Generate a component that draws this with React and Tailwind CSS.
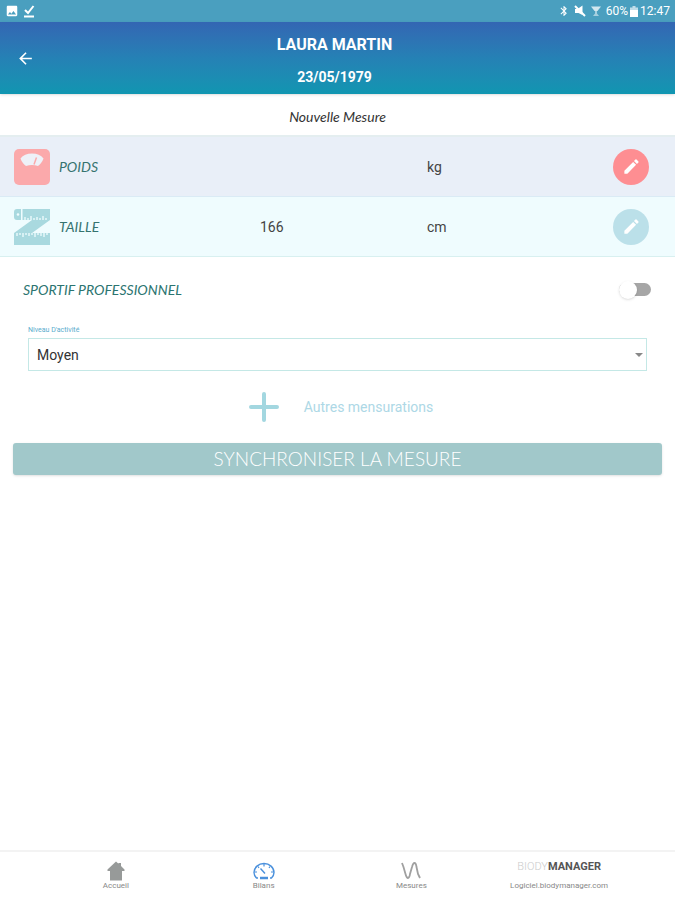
import React, { useState } from 'react';
import { MdArrowBack, MdBluetooth, MdEdit, MdImage } from 'react-icons/md';

// ─── Icons ─────────────────────────────────────────────────────

const DownloadDoneIcon = () => (
  <svg viewBox="0 0 12 14" className="w-3 h-[14px]" fill="none" stroke="#fff" strokeWidth="2">
    <path d="M2 6l3 3L10.500 2" />
    <path d="M1 12.500h10" />
  </svg>
);

const MuteIcon = () => (
  <svg viewBox="0 0 12 12" className="w-3 h-3" fill="#fff">
    <path d="M1 4h2.500L8.500 0.500V10L4.500 8H1z" />
    <path d="M1 1l10 10" stroke="#fff" strokeWidth="2" />
  </svg>
);

const WifiIcon = () => (
  <svg viewBox="0 0 12 12" className="w-3 h-3" fill="#fff">
    <path d="M1 1.500h10L7.500 6h-3z" opacity=".75" />
    <path d="M5 6h2v2.500l2 2.500H3l2-2.500z" opacity=".5" />
  </svg>
);

const BatteryIcon = () => (
  <svg viewBox="0 0 8 12" className="w-2 h-3">
    <path d="M2.500 1h3v1.500H8V5H0V2.500h2.500z" fill="#fff" opacity=".65" />
    <path d="M0 5h8v7H0z" fill="#fff" />
  </svg>
);

const ScaleIcon = () => (
  <svg viewBox="0 0 36 36" className="w-9 h-9">
    <rect width="36" height="36" rx="5" fill="#fba9ab" />
    <path d="M18 4.500c5 0 9 1.800 11.500 5-1.200 3.500-3.500 6.300-5.500 7.500-3.800-1.300-8.200-1.300-12 0-2-1.200-4.300-4-5.500-7.500C9 6.300 13 4.500 18 4.500z" fill="#eef1f8" />
    <path d="M20 15.500l2.500-7" stroke="#fba9ab" strokeWidth="1.500" />
  </svg>
);

const RulerIcon = () => (
  <svg viewBox="0 0 36 36" className="w-9 h-9">
    <path d="M0 3q0-3 3-3h4v11H3q-3 0-3-3zM8.500 0H36v11L18 24h18v12H0V24l18-13H8.500z" fill="#a9d9df" />
    <circle cx="4" cy="5.500" r="1.300" fill="#f0fcfe" />
    <path
      d="M11 11V8M14 11V9M17 11V7M20 11V9M23 11V8M26 11V9M29 11V7M32 11V9M3 24v3M6 24v2M9 24v4M12 24v2M15 24v3M18 24v2M21 24v4M24 24v2M27 24v3M30 24v4M33 24v2"
      stroke="#f0fcfe"
      strokeWidth="1.300"
    />
  </svg>
);

const HomeIcon = () => (
  <svg viewBox="0 0 18 20" className="w-[18px] h-5" fill="#979a99">
    <path d="M9 .5l2.500 2.200V2H14v3l3.500 3.500V10H15v9.500H3V10H.5V8.500z" />
  </svg>
);

const GaugeIcon = () => (
  <svg viewBox="0 0 22 18" className="w-[22px] h-5" fill="none" stroke="#4a90dc" strokeWidth="1.400">
    <path d="M5 16H3.500Q1 13.500 1 10.500C1 5.500 5.500 1.500 11 1.500s10 4 10 9q0 3-2.500 5.500H17" />
    <path d="M7 16h8" strokeWidth="2.500" />
    <path d="M7.500 6.500l4.500 5" />
    <path d="M11 2v2.500M5 4.500l1 1.500M17 4.500L16 6M1.500 10H4M18 10h2.500" strokeWidth="1.200" />
  </svg>
);

const CurveIcon = () => (
  <svg viewBox="0 0 20 18" className="w-5 h-5" fill="none" stroke="#a0a0a0" strokeWidth="1.800">
    <path d="M1 1l1.500 4 2 7q1 4 2.500 4t2-4l2-7q1-4 2.500-4t2 4l1.500 7 2 4" />
  </svg>
);

// ─── Sub-components ────────────────────────────────────────────

const StatusBar = () => (
  <div className="h-[22px] px-[5px] flex items-center justify-between bg-[#4a9fbf] text-white">
    <div className="flex items-center gap-1">
      <MdImage size={14} />
      <DownloadDoneIcon />
    </div>
    <div className="flex items-center gap-[2px] text-xs">
      <div className="flex items-center gap-1 pr-[2px]">
        <MdBluetooth size={12} />
        <MuteIcon />
        <WifiIcon />
      </div>
      <span>60%</span>
      <BatteryIcon />
      <span>12:47</span>
    </div>
  </div>
);

/** One measurement line: icon, name, value, unit and edit button */
const MeasureRow = ({ id, icon, label, unit, value, onChange, rowClass, buttonClass }) => (
  <div className={`h-[60px] pl-[14px] pr-[26px] grid grid-cols-[246fr_167fr_186fr_36fr] items-center border-b ${rowClass}`}>
    <label htmlFor={id} className="flex items-center gap-[9px] font-[Lato] italic text-sm text-[#35736f]">
      {icon}
      {label}
    </label>
    <input
      id={id}
      type="text"
      inputMode="decimal"
      value={value}
      onChange={(e) => onChange(e.target.value)}
      className="w-20 bg-transparent outline-none text-sm text-[#444]"
    />
    <span className="text-sm text-[#444]">{unit}</span>
    <button type="button" aria-label={label} className={`w-9 h-9 rounded-full flex items-center justify-center text-white ${buttonClass}`}>
      <MdEdit size={19} />
    </button>
  </div>
);

const NavItem = ({ icon, label }) => (
  <a href="#" className="flex flex-col items-center">
    {icon}
    <span className="text-[8px] leading-[10px]">{label}</span>
  </a>
);

// ─── Main Component ────────────────────────────────────────────

const App = () => {
  const [poids, setPoids] = useState('');
  const [taille, setTaille] = useState('166');
  const [sportif, setSportif] = useState(false);
  const [niveau, setNiveau] = useState('Moyen');

  return (
    <div className="min-h-screen flex flex-col bg-white font-[Roboto,sans-serif]">
      <StatusBar />

      {/* Patient header */}
      <header className="h-[72px] px-4 grid grid-cols-[24px_1fr_30px] items-center bg-linear-to-b from-[#3366b3] via-[#2581b5] to-[#1096b1] text-white shadow-sm">
        <button type="button" aria-label="Retour">
          <MdArrowBack size={19} />
        </button>
        <div className="pt-[6px] flex flex-col items-center gap-3 font-bold">
          <h1 className="text-base leading-5">LAURA MARTIN</h1>
          <p className="text-sm leading-5">23/05/1979</p>
        </div>
      </header>

      <main className="flex-1">
        <h2 className="h-[43px] pt-1 flex items-center justify-center font-[Lato] italic text-sm text-[#333] border-b-2 border-[#e4eef0]">
          Nouvelle Mesure
        </h2>

        <MeasureRow
          id="poids"
          icon={<ScaleIcon />}
          label="POIDS"
          unit="kg"
          value={poids}
          onChange={setPoids}
          rowClass="bg-[#e9eff8] border-[#daebf5]"
          buttonClass="bg-[#fe8e92]"
        />
        <MeasureRow
          id="taille"
          icon={<RulerIcon />}
          label="TAILLE"
          unit="cm"
          value={taille}
          onChange={setTaille}
          rowClass="bg-[#effcfe] border-[#d8f0f0]"
          buttonClass="bg-[#bbe0e9]"
        />

        <label className="h-[65px] pl-[23px] pr-6 flex items-center justify-between font-[Lato] italic text-sm text-[#2b7470]">
          SPORTIF PROFESSIONNEL
          <span className="relative w-8 h-5 flex items-center">
            <input
              type="checkbox"
              checked={sportif}
              onChange={(e) => setSportif(e.target.checked)}
              className="peer appearance-none w-8 h-[13px] rounded-full bg-[#a6a6a6] checked:bg-[#a9d9df]"
            />
            <span className="absolute left-0 w-[18px] h-[18px] rounded-full bg-white shadow peer-checked:left-[14px]" />
          </span>
        </label>

        <div className="px-7 flex flex-col">
          <label htmlFor="niveau" className="text-[7px] leading-4 text-[#5aaccd]">Niveau D'activité</label>
          <div className="relative">
            <select
              id="niveau"
              value={niveau}
              onChange={(e) => setNiveau(e.target.value)}
              className="block w-full h-[33px] px-2 appearance-none bg-white border border-[#c4e8e6] text-sm text-[#333]"
            >
              <option>Faible</option>
              <option>Moyen</option>
              <option>Intense</option>
            </select>
            <svg viewBox="0 0 8 4" className="absolute right-1 top-[15px] w-2 h-1 pointer-events-none" fill="#888">
              <path d="M0 0h8L4 4z" />
            </svg>
          </div>
        </div>

        <div className="h-[72px] pl-[6px] flex items-center justify-center">
          <button type="button" className="flex items-center gap-6 text-sm text-[#add8e6]">
            <svg viewBox="0 0 32 32" className="w-8 h-8" fill="none" stroke="#a3d7e0" strokeWidth="4" strokeLinecap="round">
              <path d="M16 3v26M3 16h26" />
            </svg>
            Autres mensurations
          </button>
        </div>

        <div className="px-[13px]">
          <button type="button" className="w-full h-8 rounded-[3px] bg-[#a1c8ca] text-white font-[Lato] font-light text-[19px] shadow-sm">
            SYNCHRONISER LA MESURE
          </button>
        </div>
      </main>

      <nav className="h-[50px] px-[42px] pt-[9px] grid grid-cols-4 border-t-2 border-[#f3f3f3] text-[#888]">
        <NavItem icon={<HomeIcon />} label="Accueil" />
        <NavItem icon={<GaugeIcon />} label="Bilans" />
        <NavItem icon={<CurveIcon />} label="Mesures" />
        <NavItem
          icon={
            <span className="h-5 flex items-center pb-2 text-[11px] text-[#555]">
              <span className="font-light text-[#ccc]">BIODY</span>
              <b>MANAGER</b>
            </span>
          }
          label="Logiciel.biodymanager.com"
        />
      </nav>
    </div>
  );
};

export default App;
